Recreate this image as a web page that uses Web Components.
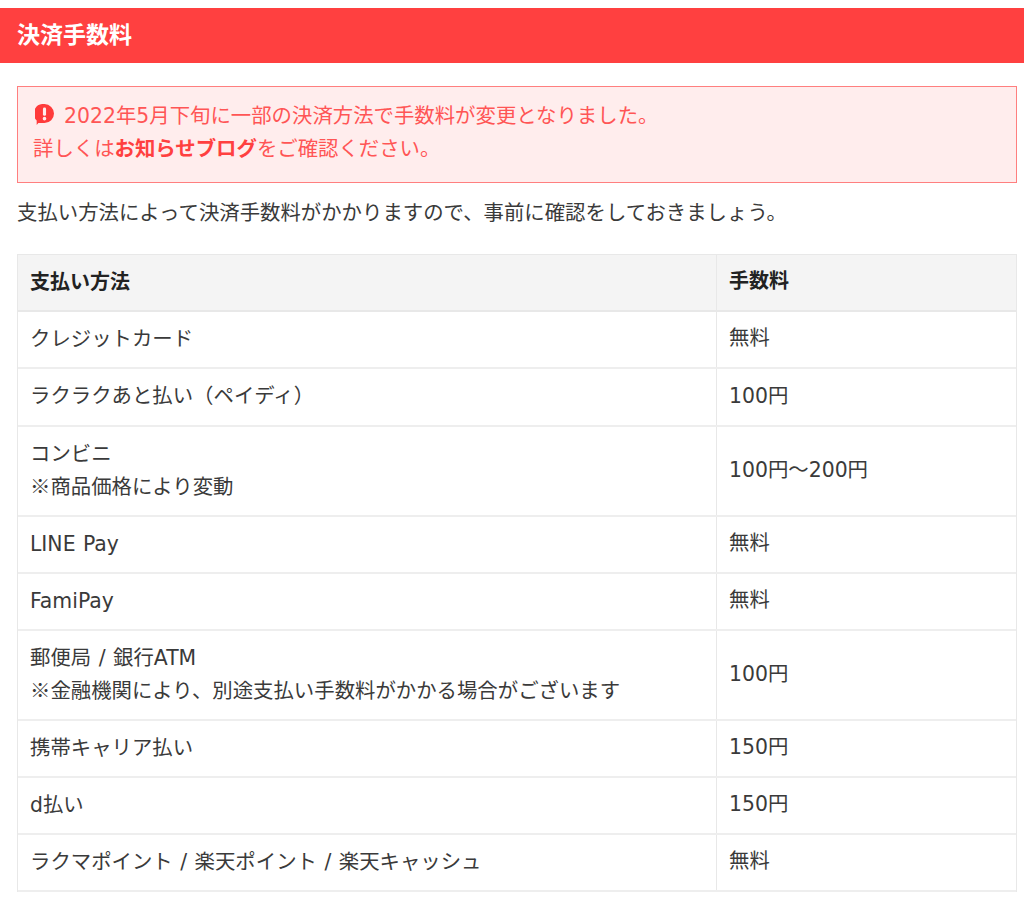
<!DOCTYPE html>
<html lang="ja">
<head>
<meta charset="utf-8">
<title>決済手数料</title>
<style>
    html, body { background: #fff; }
    body {
        margin: 0;
        padding-top: 8px;
        font-family: "DejaVu Sans", "Noto Sans CJK JP", sans-serif;
        font-size: 20.4px;
        line-height: 33px;
        word-spacing: 1px;
        color: #3a3a3a;
    }
    .mark { font-family: "Noto Sans CJK JP", sans-serif; line-height: 0; }
</style>
</head>
<body>
<fee-section heading="決済手数料">
    <fee-notice>2022年5月下旬に一部の決済方法で手数料が変更となりました。<br>
        詳しくは<b>お知らせブログ</b>をご確認ください。
    </fee-notice>
    <p slot="lead">支払い方法によって決済手数料がかかりますので、事前に確認をしておきましょう。</p>
    <fee-table slot="table">
        <fee-row head><span>支払い方法</span><span slot="fee">手数料</span></fee-row>
        <fee-row><span>クレジットカード</span><span slot="fee">無料</span></fee-row>
        <fee-row tall><span>ラクラクあと払い（ペイディ）</span><span slot="fee">100円</span></fee-row>
        <fee-row><span>コンビニ<br><span class="mark">※</span>商品価格により変動</span><span slot="fee">100円～200円</span></fee-row>
        <fee-row><span>LINE Pay</span><span slot="fee">無料</span></fee-row>
        <fee-row><span>FamiPay</span><span slot="fee">無料</span></fee-row>
        <fee-row><span>郵便局 / 銀行ATM<br><span class="mark">※</span>金融機関により、別途支払い手数料がかかる場合がございます</span><span slot="fee">100円</span></fee-row>
        <fee-row><span>携帯キャリア払い</span><span slot="fee">150円</span></fee-row>
        <fee-row><span>d払い</span><span slot="fee">150円</span></fee-row>
        <fee-row><span>ラクマポイント / 楽天ポイント / 楽天キャッシュ</span><span slot="fee">無料</span></fee-row>
    </fee-table>
</fee-section>

<script>
class FeeSection extends HTMLElement {
    connectedCallback() {
        this.attachShadow({ mode: 'open' });
        this.shadowRoot.innerHTML = `
            <style>
                :host { display: block; }
                h2 {
                    margin: 0;
                    box-sizing: border-box;
                    height: 55px;
                    padding: 0 0 1px 17px;
                    display: flex;
                    align-items: center;
                    background: #ff4040;
                    color: #fff;
                    font-size: 23px;
                    font-weight: 700;
                }
                .body {
                    padding: 23px 7px 0 17px;
                    display: flex;
                    flex-direction: column;
                }
                ::slotted(p) { margin: 14px 0 24px; }
            </style>
            <h2>${this.getAttribute('heading')}</h2>
            <div class="body">
                <slot></slot>
                <slot name="lead"></slot>
                <slot name="table"></slot>
            </div>
        `;
    }
}

class FeeNotice extends HTMLElement {
    connectedCallback() {
        this.attachShadow({ mode: 'open' });
        this.shadowRoot.innerHTML = `
            <style>
                :host {
                    display: block;
                    box-sizing: border-box;
                    height: 97px;
                    padding: 13px 15px 0;
                    background: #ffeded;
                    border: 1px solid #ff7f7f;
                    color: #ff5555;
                }
                svg {
                    width: 19px;
                    height: 21px;
                    margin: 0 10px 0 2px;
                    vertical-align: -2px;
                }
                ::slotted(b) { color: #ff4040; }
            </style>
            <svg viewBox="1.5 1 17 18.600" aria-hidden="true">
                <path fill="#ff3b3b" d="M10 1a8.500 8.500 0 0 1 0 17H4.500l-1.500 1.600V15.600A8.500 8.500 0 0 1 10 1z"/>
                <rect x="8.600" y="4" width="2.800" height="7.500" rx="1.300" fill="#ffeded"/>
                <circle cx="10" cy="14" r="1.600" fill="#ffeded"/>
            </svg><slot></slot>
        `;
    }
}

class FeeTable extends HTMLElement {
    connectedCallback() {
        this.attachShadow({ mode: 'open' });
        this.shadowRoot.innerHTML = `
            <style>
                :host {
                    display: block;
                    border: solid #e8e8e8;
                    border-width: 1px 1px 0 1px;
                }
            </style>
            <slot></slot>
        `;
    }
}

class FeeRow extends HTMLElement {
    connectedCallback() {
        this.attachShadow({ mode: 'open' });
        this.shadowRoot.innerHTML = `
            <style>
                :host {
                    display: grid;
                    grid-template-columns: 699px 1fr;
                    border-bottom: 2px solid #eeeeee;
                }
                :host([head]) {
                    background: #f4f4f4;
                    color: #222;
                    font-weight: 700;
                    font-size: 20px;
                    border-bottom-color: #e8e8e8;
                }
                .cell {
                    padding: 11px 12px;
                    display: flex;
                    align-items: center;
                }
                :host([tall]) .cell { padding-bottom: 12px; }
                .method { border-right: 1px solid #e8e8e8; }
                .fee { padding-top: 10px; padding-bottom: 12px; }
            </style>
            <div class="cell method"><slot></slot></div>
            <div class="cell fee"><slot name="fee"></slot></div>
        `;
    }
}

customElements.define('fee-section', FeeSection);
customElements.define('fee-notice', FeeNotice);
customElements.define('fee-table', FeeTable);
customElements.define('fee-row', FeeRow);
</script>
</body>
</html>
